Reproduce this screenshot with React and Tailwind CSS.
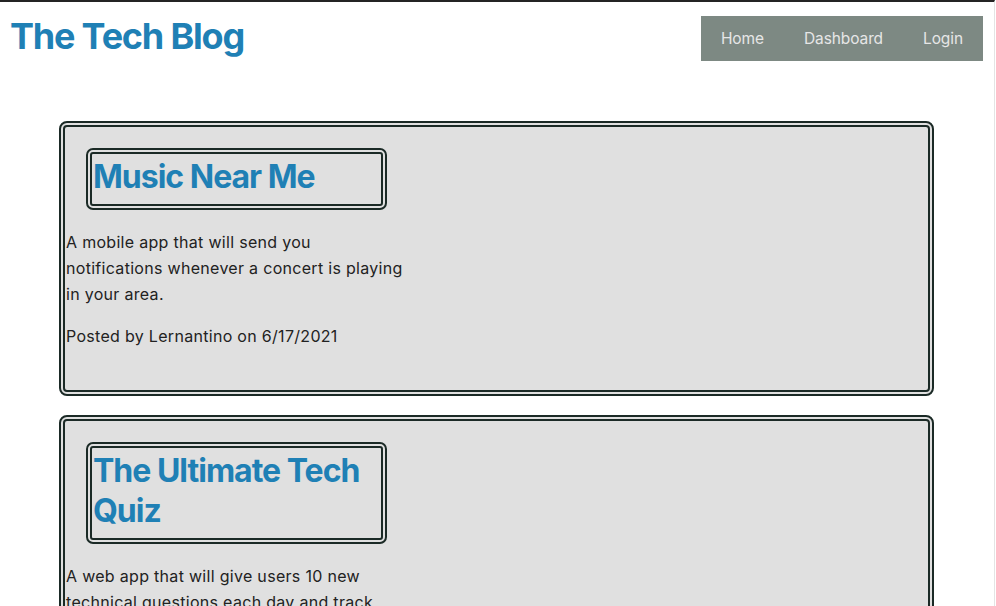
import React from "react";

const posts = [
  {
    title: "Music Near Me",
    body: "A mobile app that will send you notifications whenever a concert is playing in your area.",
    author: "Lernantino",
    date: "6/17/2021",
  },
  {
    title: "The Ultimate Tech Quiz",
    body: "A web app that will give users 10 new technical questions each day and track their progress in things like programming, cybersecurity, databases, and more!",
    author: "Xandromus",
    date: "7/4/2021",
  },
];

export default function App() {
  return (
    <div
      className="w-[995px] min-h-screen border-r border-[#e4e4e4] border-t-2 border-t-[#242424] bg-white text-[#222] overflow-hidden"
      style={{ fontFamily: "Inter, 'Noto Sans', sans-serif" }}
    >
      <header className="flex justify-between items-start pl-[10px] pr-[11px] pt-[14px]">
        <h1 className="text-[36px] leading-[40px] font-bold text-[#1f80b5] tracking-[-1.2px]">The Tech Blog</h1>
        <nav className="flex bg-[#7d8983] h-[45px] items-center text-[#e6e6e6] text-[15.5px] tracking-[-0.1px]">
          <a className="px-5">Home</a>
          <a className="px-5">Dashboard</a>
          <a className="px-5">Login</a>
        </nav>
      </header>
      <main className="pt-[60px] pl-[59px] pr-[60px] flex flex-col gap-[19px]">
        {posts.map((p) => (
          <article
            key={p.title}
            className="border-[6px] border-double border-[#1b2a26] rounded-[8px] bg-[#e0e0e0] pb-[41px]"
          >
            <div className="ml-[21px] mt-[21px] w-[301px] border-[6px] border-double border-[#1b2a26] rounded-[7px] pt-[3px] pb-[7px] pl-[1px]">
              <h2 className="text-[32px] leading-[40px] font-bold text-[#1f80b5] tracking-[-1px]">{p.title}</h2>
            </div>
            <p className="mt-[19px] w-[338px] text-[16px] leading-[26px] tracking-[0.3px] pl-[1px]">{p.body}</p>
            <p className="mt-4 text-[16px] leading-[26px] tracking-[0.3px] pl-[1px]">
              Posted by {p.author} on {p.date}
            </p>
          </article>
        ))}
      </main>
    </div>
  );
}
